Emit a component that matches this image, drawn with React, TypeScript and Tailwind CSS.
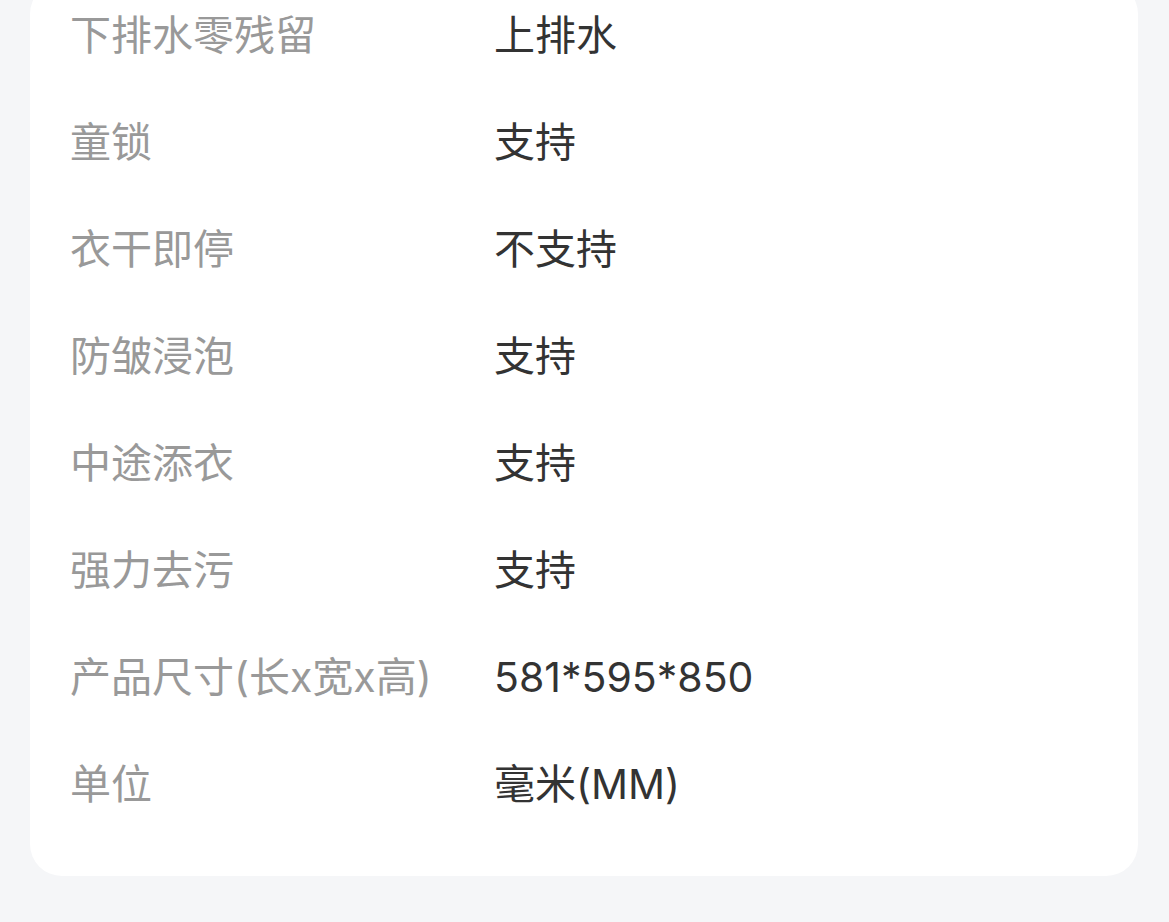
import React from "react";

const rows: [string, string][] = [
  ["下排水零残留", "上排水"],
  ["童锁", "支持"],
  ["衣干即停", "不支持"],
  ["防皱浸泡", "支持"],
  ["中途添衣", "支持"],
  ["强力去污", "支持"],
  ["产品尺寸(长x宽x高)", "581*595*850"],
  ["单位", "毫米(MM)"],
];

export default function App() {
  return (
    <div
      className="w-[1169px] h-[922px] overflow-hidden bg-[#f5f6f8]"
      style={{ fontFamily: 'Inter, "Noto Sans CJK SC", "Noto Sans", sans-serif' }}
    >
      <div className="mx-[30px] w-[1108px] -mt-[18px] bg-white rounded-[32px] pl-[40px] pb-[38px]">
        {rows.map(([k, v], i) => (
          <div key={i} className="flex items-center h-[107px] text-[41px] leading-none">
            <div className="w-[424px] shrink-0 text-[#999999]">{k}</div>
            <div className="text-[#333333] [font-feature-settings:'calt'_0]">{v}</div>
          </div>
        ))}
      </div>
    </div>
  );
}
